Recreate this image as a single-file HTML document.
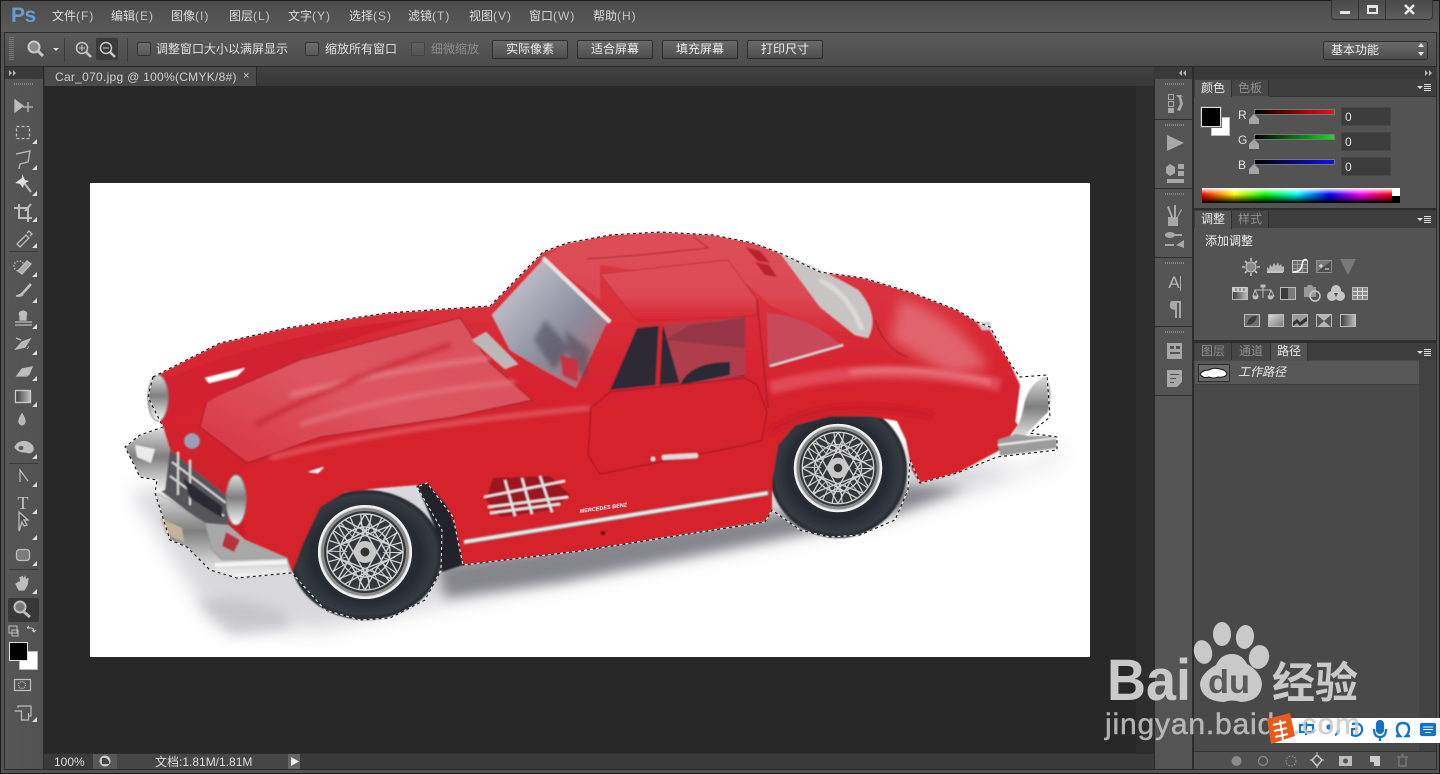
<!DOCTYPE html>
<html lang="zh"><head><meta charset="utf-8"><title>Photoshop</title>
<style>
html,body{margin:0;padding:0;background:#1c1c1c}
body{position:relative;width:1440px;height:774px;overflow:hidden;font-family:"Liberation Sans","WenQuanYi Zen Hei","Noto Sans CJK SC",sans-serif}
.b{position:absolute;box-sizing:border-box}
.t{position:absolute;white-space:nowrap;font-size:12px;line-height:14px;color:#e0e0e0}
.m{color:#dcdcdc;top:9px}
.m i{font-style:normal;color:#c0c6cc;letter-spacing:1px}
.btn{position:absolute;top:40px;width:76px;height:19px;box-sizing:border-box;border:1px solid #2e2e2e;border-radius:2px;background:linear-gradient(#6a6a6a,#4e4e4e);color:#ececec;font-size:12px;line-height:17px;text-align:center}
.chk{position:absolute;top:42px;width:14px;height:14px;box-sizing:border-box;border:1px solid #353535;border-radius:2px;background:linear-gradient(#6e6e6e,#595959)}
.tab{position:absolute;box-sizing:border-box;text-align:center;font-size:12px;line-height:16px;color:#8f8f8f;background:#464646;border-right:1px solid #303030}
.tab.on{background:#535353;color:#e6e6e6}
.inp{position:absolute;left:1341px;width:50px;height:19px;background:#3c3c3c;border:1px solid #474747;box-sizing:border-box;color:#e0e0e0;font-size:12px;line-height:18px;padding-left:3px}
</style></head><body>

<!-- chrome backgrounds -->
<div class="b" style="left:1px;top:1px;width:1438px;height:772px;background:#535353;border-radius:4px 4px 0 0"></div>
<div class="b" style="left:1px;top:1px;width:1438px;height:31px;background:linear-gradient(#4c4c4c,#5a5a5a)"></div>
<div class="b" style="left:4px;top:32px;width:1433px;height:1px;background:#2c2c2c"></div>
<div class="b" style="left:4px;top:33px;width:1433px;height:33px;background:linear-gradient(#5a5a5a,#4c4c4c)"></div>
<div class="b" style="left:4px;top:66px;width:1433px;height:1px;background:#2a2a2a"></div>
<div class="b" style="left:4px;top:32px;width:1px;height:738px;background:#2a2a2a"></div>
<div class="b" style="left:1436px;top:32px;width:1px;height:738px;background:#2a2a2a"></div>
<div class="b" style="left:4px;top:769px;width:1433px;height:1px;background:#2a2a2a"></div>

<!-- tools -->
<div class="b" style="left:5px;top:67px;width:38px;height:12px;background:#3a3a3a"></div>
<div class="b" style="left:5px;top:79px;width:38px;height:690px;background:linear-gradient(90deg,#565656,#525252)"></div>
<div class="b" style="left:43px;top:67px;width:1px;height:703px;background:#2a2a2a"></div>

<!-- tab row & document -->
<div class="b" style="left:44px;top:67px;width:1110px;height:19px;background:linear-gradient(#434343,#363636)"></div>
<div class="b" style="left:45px;top:67px;width:212px;height:19px;background:#4a4a4a;border-right:1px solid #2c2c2c"></div>
<div class="t" style="left:55px;top:70px;color:#cfcfcf;letter-spacing:.28px">Car_070.jpg @ 100%(CMYK/8#)</div>
<div class="t" style="left:243px;top:69px;color:#cfcfcf;font-size:11px">×</div>
<div class="b" style="left:44px;top:86px;width:1110px;height:667px;background:#282828"></div>
<div class="b" style="left:1136px;top:86px;width:18px;height:667px;background:#2d2d2d"></div>
<div class="b" style="left:44px;top:753px;width:1110px;height:16px;background:#3a3a3a;border-top:1px solid #2f2f2f"></div>
<div class="b" style="left:93px;top:754px;width:24px;height:15px;background:#585858"></div>
<div class="b" style="left:117px;top:754px;width:171px;height:15px;background:#464646"></div>
<div class="b" style="left:288px;top:754px;width:12px;height:15px;background:#666"></div>
<div class="b" style="left:90px;top:183px;width:1000px;height:474px;background:#fff"></div>
<div class="t" style="left:54px;top:755px;color:#dcdcdc">100%</div>
<div class="t" style="left:155px;top:755px;color:#dcdcdc">文档:1.81M/1.81M</div>

<!-- dock & panels -->
<div class="b" style="left:1154px;top:67px;width:283px;height:12px;background:#3a3a3a"></div>
<div class="b" style="left:1154px;top:79px;width:1px;height:691px;background:#2a2a2a"></div>
<div class="b" style="left:1155px;top:79px;width:37px;height:690px;background:#545454"></div>
<div class="b" style="left:1192px;top:67px;width:2px;height:703px;background:#2c2c2c"></div>
<div class="b" style="left:1155px;top:119px;width:37px;height:1px;background:#2e2e2e"></div>
<div class="b" style="left:1155px;top:188px;width:37px;height:1px;background:#2e2e2e"></div>
<div class="b" style="left:1155px;top:257px;width:37px;height:1px;background:#2e2e2e"></div>
<div class="b" style="left:1155px;top:326px;width:37px;height:1px;background:#2e2e2e"></div>
<div class="b" style="left:1155px;top:395px;width:37px;height:1px;background:#2e2e2e"></div>

<div class="b" style="left:1194px;top:79px;width:242px;height:17px;background:#3e3e3e"></div>
<div class="tab on" style="left:1195px;top:80px;width:37px;height:17px">颜色</div>
<div class="tab" style="left:1232px;top:80px;width:37px;height:16px">色板</div>
<div class="b" style="left:1194px;top:96px;width:1px;height:1px;background:#333"></div>
<div class="b" style="left:1269px;top:96px;width:167px;height:1px;background:#333"></div>
<div class="b" style="left:1194px;top:208px;width:242px;height:2px;background:#2e2e2e"></div>
<div class="b" style="left:1194px;top:210px;width:242px;height:18px;background:#3e3e3e"></div>
<div class="tab on" style="left:1195px;top:211px;width:37px;height:18px">调整</div>
<div class="tab" style="left:1232px;top:211px;width:37px;height:17px">样式</div>
<div class="b" style="left:1194px;top:340px;width:242px;height:3px;background:#2e2e2e"></div>
<div class="b" style="left:1194px;top:343px;width:242px;height:17px;background:#3e3e3e"></div>
<div class="tab" style="left:1195px;top:343px;width:37px;height:17px">图层</div>
<div class="tab" style="left:1232px;top:343px;width:39px;height:17px">通道</div>
<div class="b" style="left:1194px;top:360px;width:242px;height:391px;background:#494949"></div>
<div class="tab on" style="left:1271px;top:343px;width:37px;height:18px;background:#535353">路径</div>
<div class="b" style="left:1195px;top:361px;width:224px;height:24px;background:#575757;border-bottom:1px solid #3f3f3f"></div>
<div class="b" style="left:1419px;top:360px;width:17px;height:391px;background:#424242"></div>
<div class="b" style="left:1194px;top:751px;width:242px;height:18px;background:#505050;border-top:1px solid #333"></div>
<div class="t" style="left:1238px;top:365px;font-style:italic;color:#e8e8e8">工作路径</div>
<div class="b" style="left:1198px;top:364px;width:32px;height:18px;background:#6a6a6a;border:1px solid #2e2e2e"></div>

<!-- color panel -->
<div class="t" style="left:1238px;top:108px">R</div>
<div class="t" style="left:1238px;top:133px">G</div>
<div class="t" style="left:1238px;top:158px">B</div>
<div class="inp" style="top:107px">0</div>
<div class="inp" style="top:132px">0</div>
<div class="inp" style="top:157px">0</div>
<div class="b" style="left:1254px;top:109px;width:81px;height:6px;background:linear-gradient(90deg,#000,#f01010);border:1px solid #777"></div>
<div class="b" style="left:1254px;top:134px;width:81px;height:6px;background:linear-gradient(90deg,#000,#10e020);border:1px solid #777"></div>
<div class="b" style="left:1254px;top:159px;width:81px;height:6px;background:linear-gradient(90deg,#000,#1010f0);border:1px solid #777"></div>
<div class="b" style="left:1202px;top:188px;width:190px;height:15px;background:linear-gradient(#fff 0,rgba(255,255,255,0) 42%,rgba(0,0,0,0) 42%,#000 100%),linear-gradient(90deg,#f00,#ff0 17%,#0f0 33%,#0ff 50%,#00f 67%,#f0f 83%,#f00 100%)"></div>
<div class="b" style="left:1392px;top:188px;width:8px;height:8px;background:#fff"></div>
<div class="b" style="left:1392px;top:196px;width:8px;height:7px;background:#000"></div>
<div class="t" style="left:1205px;top:234px;color:#eee">添加调整</div>

<!-- menu -->
<div class="t" style="left:11px;top:4px;font-size:21px;line-height:24px;font-weight:bold;color:#6d9cca;letter-spacing:-.5px">Ps</div>
<div class="t m" style="left:52px">文件<i>(F)</i></div>
<div class="t m" style="left:111px">编辑<i>(E)</i></div>
<div class="t m" style="left:171px">图像<i>(I)</i></div>
<div class="t m" style="left:229px">图层<i>(L)</i></div>
<div class="t m" style="left:288px">文字<i>(Y)</i></div>
<div class="t m" style="left:349px">选择<i>(S)</i></div>
<div class="t m" style="left:408px">滤镜<i>(T)</i></div>
<div class="t m" style="left:469px">视图<i>(V)</i></div>
<div class="t m" style="left:529px">窗口<i>(W)</i></div>
<div class="t m" style="left:593px">帮助<i>(H)</i></div>

<!-- window controls -->
<div class="b" style="left:1331px;top:0;width:102px;height:20px;background:linear-gradient(#4a4a4a,#5c5c5c);border:1px solid #333;border-top:0;border-radius:0 0 4px 4px"></div>
<div class="b" style="left:1358px;top:0;width:1px;height:19px;background:#333"></div>
<div class="b" style="left:1385px;top:0;width:1px;height:19px;background:#333"></div>
<div class="b" style="left:1340px;top:11px;width:10px;height:3px;background:#e6e6e6"></div>
<div class="b" style="left:1367px;top:5px;width:11px;height:9px;border:2px solid #e6e6e6;border-top-width:3px"></div>

<!-- options bar -->
<div class="b" style="left:96px;top:38px;width:22px;height:22px;background:#3a3a3a;border-radius:2px"></div>
<div class="b" style="left:64px;top:38px;width:1px;height:23px;background:#3a3a3a"></div>
<div class="b" style="left:127px;top:38px;width:1px;height:23px;background:#3a3a3a"></div>
<div class="chk" style="left:137px"></div>
<div class="t" style="left:156px;top:42px">调整窗口大小以满屏显示</div>
<div class="chk" style="left:305px"></div>
<div class="t" style="left:325px;top:42px">缩放所有窗口</div>
<div class="chk" style="left:411px;opacity:.45"></div>
<div class="t" style="left:431px;top:42px;color:#8c8c8c">细微缩放</div>
<div class="btn" style="left:492px">实际像素</div>
<div class="btn" style="left:577px">适合屏幕</div>
<div class="btn" style="left:662px">填充屏幕</div>
<div class="btn" style="left:747px">打印尺寸</div>
<div class="b" style="left:1323px;top:41px;width:105px;height:19px;border:1px solid #2e2e2e;border-radius:3px;background:linear-gradient(#6a6a6a,#4e4e4e)"></div>
<div class="t" style="left:1331px;top:43px;color:#ececec">基本功能</div>

<!-- active zoom tool -->
<div class="b" style="left:8px;top:598px;width:31px;height:24px;background:#383838;border-radius:2px"></div>
<div class="b" style="left:19px;top:651px;width:19px;height:19px;background:#fff;border:1px solid #bbb"></div>
<div class="b" style="left:9px;top:642px;width:19px;height:19px;background:#000;border:1px solid #ddd"></div>
<div class="b" style="left:1211px;top:117px;width:19px;height:19px;background:#fff;border:1px solid #bbb"></div>
<div class="b" style="left:1201px;top:107px;width:20px;height:20px;background:#000;border:1px solid #ddd;outline:1px solid #666"></div>

<!-- everything drawn -->
<svg width="1440" height="774" viewBox="0 0 1440 774" style="position:absolute;left:0;top:0" xmlns="http://www.w3.org/2000/svg">
<defs>
<filter id="bl1" x="-10%" y="-10%" width="120%" height="120%"><feGaussianBlur stdDeviation=".7"/></filter>
<filter id="bl2" x="-30%" y="-30%" width="160%" height="160%"><feGaussianBlur stdDeviation="2.5"/></filter>
<filter id="bl4" x="-30%" y="-30%" width="160%" height="160%"><feGaussianBlur stdDeviation="6"/></filter>
<filter id="bl8" x="-30%" y="-30%" width="160%" height="160%"><feGaussianBlur stdDeviation="10"/></filter>
<linearGradient id="body" x1="0" y1="0" x2="0" y2="1"><stop offset="0" stop-color="#dc3a46"/><stop offset=".45" stop-color="#d6232f"/><stop offset="1" stop-color="#c81c28"/></linearGradient>
<linearGradient id="hood" x1="0" y1="1" x2="1" y2="0"><stop offset="0" stop-color="#d83340"/><stop offset=".45" stop-color="#dc5560"/><stop offset="1" stop-color="#d9505a"/></linearGradient>
<linearGradient id="roof" x1="0" y1="0" x2="0" y2="1"><stop offset="0" stop-color="#dd4e58"/><stop offset=".55" stop-color="#dc4a54"/><stop offset="1" stop-color="#d62430"/></linearGradient>
<linearGradient id="glass" x1="0" y1="0" x2="1" y2="1"><stop offset="0" stop-color="#d4d4da"/><stop offset=".6" stop-color="#8a8c9c"/><stop offset="1" stop-color="#c26069"/></linearGradient>
<linearGradient id="chrome" x1="0" y1="0" x2="0" y2="1"><stop offset="0" stop-color="#ddd"/><stop offset=".45" stop-color="#7e7e7e"/><stop offset=".75" stop-color="#c4c4c4"/><stop offset="1" stop-color="#f5f5f5"/></linearGradient>
<linearGradient id="g1" x1="0" y1="0" x2="1" y2="1"><stop offset="0" stop-color="#dcdcdc"/><stop offset="1" stop-color="#777"/></linearGradient>
<linearGradient id="g2" x1="0" y1="0" x2="1" y2="0"><stop offset="0" stop-color="#3c3c3c"/><stop offset="1" stop-color="#c0c0c0"/></linearGradient>
<radialGradient id="tire"><stop offset=".7" stop-color="#262a30"/><stop offset=".92" stop-color="#353b42"/><stop offset="1" stop-color="#22262a"/></radialGradient>
<g id="wheel">
 <circle r="47" fill="#d8d8d8"/><circle r="44" fill="#8a8a8a"/><circle r="41" fill="#34363a"/>
 <g stroke="#cfcfcf" stroke-width="1.4" fill="none">
  <circle r="38"/><circle r="25"/>
  <path d="M-38 0L20 32M-38 0L20 -32M38 0L-20 32M38 0L-20 -32M0 -38L32 20M0 -38L-32 20M0 38L32 -20M0 38L-32 -20M-27 -27L30 -5M27 -27L-30 -5M-27 27L30 5M27 27L-30 5M-27 -27L5 30M27 -27L-5 30M-27 27L5 -30M27 27L-5 -30"/>
  <circle r="28" stroke-width="20" stroke-dasharray="1 7" stroke="#d6d6d6"/>
 </g>
 <circle r="11" fill="#c8c8c8"/><circle r="4.500" fill="#333"/>
 <circle r="46" fill="none" stroke="#f2f2f2" stroke-width="2"/>
</g>
<g id="c"><path d="M0 0h5v-5z" fill="#ddd"/></g>
</defs>

<!-- ===== CAR ===== -->
<g>
 <path d="M130 490L215 625L320 630L440 605L780 540L900 515L1050 465L1070 445L1020 470L850 440L300 480Z" fill="#c4c4ca" filter="url(#bl8)" opacity=".65"/>
 <path d="M438 565L445 598L560 582L780 538L900 512L965 488L900 485L800 510Z" fill="#85858c" filter="url(#bl4)"/>
 <path d="M195 600L232 636L290 628L285 612L240 600Z" fill="#b4b4ba" filter="url(#bl4)" opacity=".55"/>
 <g filter="url(#bl1)">
 <!-- tires + wheel wells -->
 <path d="M417 485L427 483L447 505L455 525L463 565L442 572L436 530Z" fill="#20242a"/>
 <ellipse cx="366" cy="555" rx="76" ry="65" fill="url(#tire)"/>
 <ellipse cx="838" cy="470" rx="69" ry="68" fill="url(#tire)"/>
 <!-- body -->
 <path d="M153 377L220 343L287 328L387 313L490 306L543 252L567 243L610 235L660 232L713 235L753 243L780 253L820 272L863 278L913 293L957 310L977 322L990 330L1010 363L1020 385L1015 425L1000 450L957 473L920 483L912 470L906 440L897 421L870 416L830 416L795 425L778 445L772 480L772 510L765 521L580 551L463 565L455 525L447 505L427 483L417 485L380 488L345 492L320 507L303 543L292 572L287 558L245 540L228 525L170 450L160 420Z" fill="url(#body)"/>
 <!-- lower side -->
 <path d="M240 470Q360 412 590 408L770 402L905 385L1000 400L1018 425L1000 450L957 473L920 483L912 470L906 440L897 421L870 416L830 416L795 425L778 445L772 480L772 510L765 521L580 551L463 565L455 525L447 505L427 483L417 485L380 488L345 492L320 507L303 543L292 572L287 558L245 540Z" fill="#d6202c"/>
 <!-- hood -->
 <path d="M460 318L490 363L532 400L453 417L320 437L247 463L200 427L207 400L300 360Z" fill="url(#hood)"/>
 <path d="M460 318L490 363L532 400L453 417L320 437L247 463L200 427L207 400L300 360Z" fill="none" stroke="#8e1520" stroke-width=".8"/>
 <path d="M165 380Q280 330 430 318Q330 340 230 390Q190 412 170 420Z" fill="#d22230"/>
 <g filter="url(#bl2)" fill="none">
  <path d="M290 395Q380 372 490 358" stroke="#e67f85" stroke-width="4"/>
  <path d="M300 425Q400 392 515 382" stroke="#e5747b" stroke-width="4"/>
  <path d="M255 425Q330 385 450 345" stroke="#c92733" stroke-width="4"/>
  <path d="M270 458Q400 425 590 408" stroke="#e2636c" stroke-width="4"/>
  <path d="M770 388Q880 358 1000 385" stroke="#e24a56" stroke-width="13"/>
  <path d="M850 372Q920 365 990 382" stroke="#e77a80" stroke-width="4"/>
 </g>
 <path d="M900 298Q960 318 988 368L950 374L890 340Z" fill="#e1646c" filter="url(#bl4)"/>
 <path d="M770 432Q800 412 840 408Q890 406 930 415" stroke="#b81a26" stroke-width="2.500" fill="none" filter="url(#bl2)"/>
 <path d="M205 378l40-10-8 8-28 7zM308 472l16-5-6 6z" fill="#fff"/>
 <!-- roof / upper -->
 <path d="M543 258L567 243L660 232L713 236L753 245L780 253L820 307L865 342L845 340L770 305L748 285L600 265L600 300Z" fill="url(#roof)"/>
 <path d="M600 274L728 260L757 300V316L638 322Z" fill="url(#roof)" stroke="#b0202a" stroke-width=".6"/>
 <path d="M587 259L640 255L708 248L693 236" fill="none" stroke="#a8262e" stroke-width="1"/>
 <!-- windshield -->
 <path d="M492 315L543 260L607 322L576 388L540 368L510 350Z" fill="url(#glass)"/>
 <path d="M543 258L610 322" stroke="#e6e2e2" stroke-width="4" fill="none"/>
 <path d="M545 320l25 28-16 22-20-30zM565 330l25 20-5 30-15-20z" fill="#4a4654" opacity=".55" filter="url(#bl2)"/>
 <path d="M560 355l18 5 0 22-15-6z" fill="#c83040" filter="url(#bl1)"/>
 <path d="M472 340L486 332L518 364L505 369Z" fill="#bdb8b8"/>
 <!-- side windows -->
 <path d="M610 390L637 328L745 317V376Z" fill="#2f2c34"/>
 <path d="M663 325L745 317V375L680 385Z" fill="#b03c4c"/>
 <path d="M665 340L690 325L745 318V348Z" fill="#8a3042" opacity=".7"/>
 <path d="M680 385Q690 362 730 362V375Z" fill="#2a2c34"/>
 <rect x="657" y="325" width="4" height="64" fill="#d6252f" transform="rotate(3 659 357)"/>
 <path d="M767 313Q810 316 843 347L768 367Z" fill="#c84a5a"/>
 <path d="M770 366L843 345" stroke="#d8d8d8" stroke-width="2"/>
 <path d="M780 253Q820 268 858 290Q880 315 868 338L855 335L820 307Z" fill="#c9c4c4"/>
 <path d="M820 280Q850 295 862 330" stroke="#dcd9d9" stroke-width="5" fill="none" filter="url(#bl1)"/>
 <path d="M745 247l15 4 10 12-12-2zM755 262l14 3 8 12-12-2z" fill="#b8202c"/>
 <!-- door -->
 <path d="M591 408L610 392L745 378L757 385L767 412L762 440L745 445L600 474L588 455Z" fill="none" stroke="#9b1520" stroke-width="1"/>
 <path d="M757 300L768 408M875 320Q885 350 908 357" fill="none" stroke="#8e1a20" stroke-width="1"/>
 <rect x="662" y="454" width="36" height="5" rx="2" fill="#dcdcdc" transform="rotate(-3 680 457)"/>
 <circle cx="653" cy="459" r="2" fill="#fff"/>
 <!-- chrome side -->
 <path d="M464 540L768 491V495L464 544Z" fill="#e8e8e8" stroke="#7a7a7a" stroke-width=".8"/>
 <circle cx="603" cy="533" r="2" fill="#3a0a10"/>
 <!-- vent -->
 <path d="M486 500L493 478L550 476L570 495L552 510L500 517Z" fill="#9c1620"/>
 <path d="M484 497L565 481M488 507L568 497M490 513L560 504M505 480L515 516M522 478L532 514M540 476L552 512" stroke="#e6e6e6" stroke-width="2.400" fill="none"/>
 <!-- front grille -->
 <path d="M170 450L228 497V525L203 523L160 490Z" fill="#55555a"/>
 <path d="M172 462L226 503M170 476L224 516M178 452L178 495M190 460L190 505" stroke="#d8d8d8" stroke-width="2"/>
 <path d="M183 478L222 506L222 518L190 498Z" fill="#2c2c30"/>
 <path d="M228 525L245 540L287 558L222 560L212 550L205 523Z" fill="#a8a8a8"/>
 <path d="M226 532l14 8 -6 12-12-6z" fill="#b8323a"/>
 <ellipse cx="158" cy="398" rx="10" ry="23" fill="url(#chrome)" stroke="#777" stroke-width="1"/>
 <ellipse cx="236" cy="500" rx="10" ry="25" fill="url(#chrome)" stroke="#777" stroke-width="1"/>
 <circle cx="192" cy="441" r="8" fill="#9aa0b8" stroke="#b03a44" stroke-width="1"/>
 <path d="M125 447L140 435L163 427L170 450L165 490L155 493L157 480L140 477Z" fill="url(#chrome)"/>
 <path d="M135 445l20 4-4 14-14-6z" fill="#eaeaea"/>
 <path d="M155 493L170 500L205 523L212 550L222 560L287 558L290 573L237 578L210 570L187 547L170 540Z" fill="url(#chrome)" stroke="#888" stroke-width=".6"/>
 <path d="M160 518l22 10 2 14-18-8z" fill="#c2b49a"/>
 <path d="M215 565L287 562" stroke="#f4f4f4" stroke-width="4"/>
 <!-- rear bumper -->
 <path d="M1000 445Q1020 432 1024 405Q1028 385 1045 376Q1054 385 1048 412Q1040 420 1030 430L1015 445Z" fill="url(#chrome)"/>
 <path d="M998 440L1016 434L1030 436L1056 436L1057 448L1000 456Z" fill="#9c9c9c"/>
 <path d="M998 445L1056 438" stroke="#eee" stroke-width="2"/>
 <path d="M977 322L990 322L992 330L982 330Z" fill="#ccc"/>
 </g>
 <text x="580" y="513" font-size="5.500" font-weight="bold" font-style="italic" fill="#fff" transform="rotate(-8 580 513)" font-family="Liberation Sans">MERCEDES BENZ</text>
 <!-- wheels -->
 <use href="#wheel" x="365" y="552"/>
 <use href="#wheel" x="838" y="468" transform="translate(838 468) scale(.94) translate(-838 -468)"/>
 <!-- marching ants -->
 <g fill="none" stroke-width="1">
 <path d="M153 377L220 343L287 328L387 313L490 306L543 252L567 243L610 235L660 232L713 235L753 243L780 253L820 272L863 278L913 293L957 310L977 322L990 327L1010 363L1020 377L1047 375L1050 417L1030 433L1057 437L1057 450L997 457L957 473L920 483L910 460L908 490L895 520L860 535L830 537L800 530L772 510L765 522L580 551L463 565L453 517L427 483L417 487L442 530L441 570L425 600L390 618L360 620L325 610L292 573L290 573L237 578L210 570L187 547L170 540L155 493L157 480L140 477L125 447L140 435L163 427L148 397Z" stroke="#fff"/>
 <path d="M153 377L220 343L287 328L387 313L490 306L543 252L567 243L610 235L660 232L713 235L753 243L780 253L820 272L863 278L913 293L957 310L977 322L990 327L1010 363L1020 377L1047 375L1050 417L1030 433L1057 437L1057 450L997 457L957 473L920 483L910 460L908 490L895 520L860 535L830 537L800 530L772 510L765 522L580 551L463 565L453 517L427 483L417 487L442 530L441 570L425 600L390 618L360 620L325 610L292 573L290 573L237 578L210 570L187 547L170 540L155 493L157 480L140 477L125 447L140 435L163 427L148 397Z" stroke="#000" stroke-dasharray="3 3"/>
 </g>
</g>

<!-- ===== Window X & dropdown ===== -->
<path d="M1405 5l9 9M1414 5l-9 9" stroke="#e6e6e6" stroke-width="2.600"/>
<path d="M1418 47l3-4 3 4zM1418 52l3 4 3-4z" fill="#e6e6e6"/>

<!-- grips & collapse arrows -->
<path d="M9 37.500h5M9 39.500h5M9 41.500h5M9 43.500h5M9 45.500h5M9 47.500h5M9 49.500h5M9 51.500h5M9 53.500h5M9 55.500h5M9 57.500h5M9 59.500h5" stroke="#777" stroke-width="1"/>
<path d="M9 70l3 3-3 3zM13 70l3 3-3 3zM1186 70l-3 3 3 3zM1182 70l-3 3 3 3zM1425 70l3 3-3 3zM1429 70l3 3-3 3z" fill="#b5b5b5"/>
<g stroke="#888" stroke-dasharray="1 1" stroke-width="2">
<path d="M14 84h20M1165 84h20M1165 125h20M1165 194h20M1165 263h20M1165 332h20"/>
</g>
<!-- options bar icons -->
<g fill="none" stroke="#c8c8c8">
 <circle cx="34" cy="47" r="5.500" stroke-width="2" fill="#8a8a8a"/><path d="M38 51l5 5" stroke-width="3"/>
 <circle cx="82" cy="48" r="5.500" stroke-width="1.500"/><path d="M86 52l5 5" stroke-width="2.500"/><path d="M79 48h6M82 45v6" stroke-width="1"/>
 <circle cx="106" cy="48" r="5.500" stroke-width="1.500"/><path d="M110 52l5 5" stroke-width="2.500"/><path d="M103 48h6" stroke-width="1"/>
</g>
<path d="M53 48h6l-3 3z" fill="#ddd"/>
<!-- panel menu icons -->
<g id="pm"><path d="M1417 86h6l-3 3z" fill="#ddd"/><path d="M1424 84.500h7M1424 86.500h7M1424 88.500h7M1424 90.500h7" stroke="#ddd"/></g>
<use href="#pm" y="132"/><use href="#pm" y="265"/>
<path d="M1255 114l5 5v5h-10v-5zM1255 139l5 5v5h-10v-5zM1255 164l5 5v5h-10v-5z" fill="#a5a5a5" transform="translate(-1 0)"/>

<!-- tool icons -->
<g fill="none" stroke="#bdbdbd" stroke-width="1.300">
 <path d="M15 100l8 6-8 6z" fill="#bdbdbd"/><path d="M28 102v10M23 107h10"/>
 <rect x="16.500" y="126.500" width="13" height="12" stroke-dasharray="3 2"/>
 <path d="M16 154l14-3-2 11-8 2-1 5"/>
 <path d="M22 180l9 12" stroke-width="2"/><path d="M15 183l7-5 0-4 3 6 4 1-5 3-1 4-3-4z" fill="#ddd" stroke="none"/>
 <path d="M19 204v14h13M14 208h14v14M31 204l-6 7" stroke-width="2"/>
 <path d="M17 244l9-9 3 3-9 9zM27 233l2-2 3 3-2 2" fill="none"/>
 <circle cx="19" cy="266" r="5" stroke-dasharray="1.500 1.500"/><path d="M18 271l9-10 4 3-9 10z" fill="#aaa"/>
 <path d="M16 296q4-1 6-3l8-9 1 1-8 9q-1 3-7 2z" fill="#bdbdbd"/>
 <path d="M15 322h17M15 325h17"/><path d="M20 320v-4q-2-4 3-5 5 1 3 5v4z" fill="#bdbdbd"/>
 <path d="M16 349l6-7 8-3-5 8zM16 338l5 2" fill="#b5b5b5"/><path d="M27 349l2-3" stroke-dasharray="1 1"/>
 <path d="M17 376l5-7 10-2-3 7z" fill="#bdbdbd"/><path d="M17 376h10l2-2"/>
 <rect x="15.500" y="390.500" width="15" height="12" fill="url(#g2)" stroke="#ccc"/>
 <path d="M22 414q-6 9 0 11 6-2 0-11z" fill="#b5b5b5"/>
 <path d="M15 447q4-7 12-5 7 3 6 8-2 4-7 2-8 0-11-5z" fill="#bdbdbd"/><ellipse cx="21" cy="448" rx="2.500" ry="2" fill="#555" stroke="none"/>
 <path d="M20 482v-12l8 11" stroke-width="1.200"/>
 <path d="M19 531l0-19 9 8h-4l3 5-3 1-2-4z" fill="#4a4a4a"/>
 <rect x="16.500" y="549.500" width="13" height="11" rx="3" fill="#7c7c7c"/>
 <path d="M16 584l3-2 2 1-1-6 2 3 0-4 2 4 1-3 1 4 2-3-1 7-3 5h-5z" fill="#bdbdbd"/>
 <circle cx="20" cy="607" r="5.500" stroke-width="2" fill="#777"/><path d="M24 612l6 5" stroke-width="3"/>
 <rect x="14.500" y="679.500" width="16" height="11" stroke-width="1.200"/><circle cx="22" cy="685" r="3.500" stroke-dasharray="1 1"/>
 <path d="M14.500 711h7v9h7v-7M18 708v-2h13v10h-3" stroke-width="1.200" fill="none"/>
</g>
<text x="23" y="509" text-anchor="middle" font-family="Liberation Serif" font-size="18" fill="#c4c4c4">T</text>
<path d="M9 251.500h29M9 463.500h29M9 569.500h29" stroke="#3a3a3a"/>
<path d="M9 626h8v7h-8zM12 630h6v6h-6z" fill="#555" stroke="#bbb"/>
<path d="M27 628h4M27 628l2-2M31 628q3 0 3 4M34 632l-2-2M34 632l2-2" stroke="#ccc" fill="none"/>
<!-- small corner triangles -->
<g><use href="#c" x="32" y="144"/><use href="#c" x="32" y="170"/><use href="#c" x="32" y="196"/><use href="#c" x="32" y="222"/><use href="#c" x="32" y="248"/><use href="#c" x="32" y="277"/><use href="#c" x="32" y="303"/><use href="#c" x="32" y="329"/><use href="#c" x="32" y="355"/><use href="#c" x="32" y="381"/><use href="#c" x="32" y="407"/><use href="#c" x="32" y="459"/><use href="#c" x="32" y="487"/><use href="#c" x="32" y="514"/><use href="#c" x="32" y="540"/><use href="#c" x="32" y="566"/><use href="#c" x="32" y="594"/><use href="#c" x="32" y="722"/></g>

<!-- dock icons -->
<g fill="#a8a8a8" stroke="none">
 <path d="M1168.500 94.500h5v5h-5zM1168.500 101.500h5v5h-5z" stroke="#a8a8a8" fill="none"/><path d="M1168 108h6v5h-6z"/>
 <path d="M1176 95h5l3 2-3-1 2 8-3 7-3-1 3-6-1-6z"/>
 <path d="M1167 135l17 8-17 8z"/>
 <path d="M1170 164l-4 3v6l4 3 5-3v-6zM1178 164h6v5h-6zM1178 171h6v5h-6zM1167 179h17v4h-17z"/>
 <path d="M1168 217h10v9h-10zM1171 217l-4-10 2-1 4 11zM1174 217v-12h2v12zM1177 217l4-8 1 1-4 7z"/>
 <path d="M1165 234h17v2h-17zM1165 244h9v2h-9zM1176 245l8-5v8z"/><ellipse cx="1170" cy="235" rx="5" ry="3"/>
 <path d="M1180 276v15h1v-15z"/>
 <path d="M1172 301h9v17h-2v-15h-2v15h-2v-8q-6-1-5-5 0-4 2-4z"/>
 <path d="M1167 343h15v16h-15zM1170 346v3h4v-3zM1176 346v3h4v-3zM1170 352v2h10v-2z" fill-rule="evenodd"/>
 <path d="M1167 370h15v12l-5 5h-10zM1170 374v1h9v-1zM1170 378v1h6v-1zM1170 382v1h4v-1z" fill-rule="evenodd"/>
</g>
<text x="1174" y="288" text-anchor="middle" font-family="Liberation Sans" font-size="17" fill="#b8b8b8">A</text>

<!-- path thumb -->
<path d="M1200 374q3-4 9-4 5-3 11-1 6 1 7 5-2 4-9 3-4 2-9 0-6 2-9-3z" fill="#fff" stroke="#111"/>

<!-- adjustment icons -->
<g fill="none" stroke="#c4c4c4" stroke-width="1">
 <circle cx="1251" cy="267" r="5" fill="#888"/><path d="M1251 258v3M1251 273v3M1242 267h3M1257 267h3M1245 261l2 2M1255 271l2 2M1257 261l-2 2M1245 273l2-2" stroke-width="1.600"/>
 <path d="M1267 272v-5l2 2 1-5 2 3 2-4 2 3 2-4 1 4 2-2 1 3 2-1v6z" fill="#b5b5b5" stroke="none"/>
 <path d="M1267 272h16" stroke-width="2"/>
 <rect x="1292.500" y="260.500" width="15" height="12" fill="#6a6a6a"/><path d="M1293 264.500h14M1293 268.500h14M1297.500 261v11M1302.500 261v11" stroke="#999"/><path d="M1293 272q8 0 9-7t5-5" stroke="#fff" stroke-width="1.500"/>
 <path d="M1316.500 260.500h15v12h-15z" fill="#777" stroke="#8e8e8e"/><path d="M1317 272l14-11v11z" fill="#4e4e4e" stroke="none"/><path d="M1319 266h4M1321 264v4M1325 269h4" stroke="#eee"/>
</g>
<path d="M1340 259h16l-8 16z" fill="#7a7a7a"/>
<g fill="none" stroke="#bbb">
 <rect x="1232.500" y="287.500" width="15" height="12" fill="url(#g2)"/><path d="M1232 292v-5h15v5z" fill="#ccc" stroke-width="0"/><path d="M1236 288v3M1240 288v3M1244 288v3" stroke="#555"/>
 <path d="M1263 287v11M1255 290h16M1255 290l-2 6h5zM1271 290l-2 6h5z"/><path d="M1253 296h5q0 3-2.500 3t-2.500-3zM1268 296h5q0 3-2.500 3t-2.500-3z" fill="#bbb"/><path d="M1261 287h4v-2h-4z" fill="#bbb"/>
 <rect x="1280.500" y="287.500" width="15" height="12" fill="#7a7a7a"/><rect x="1281" y="288" width="7" height="11" fill="#3c3c3c" stroke="none"/>
 <path d="M1304 287h3l1-2h4l1 2h3v10h-12z" fill="#9a9a9a" stroke="none"/><circle cx="1315" cy="296" r="5" stroke="#c8c8c8" stroke-width="1.500"/>
 <g stroke="none" fill="#c4c4c4"><circle cx="1336" cy="290" r="5"/><circle cx="1332" cy="296" r="5"/><circle cx="1340" cy="296" r="5"/></g>
 <path d="M1334 293l2 4 2-4z" fill="#555" stroke="none"/>
 <rect x="1352.500" y="287.500" width="15" height="12" fill="#8a8a8a"/><path d="M1353 291.500h15M1353 295.500h15M1357.500 288v11M1362.500 288v11" stroke="#ddd"/>
 <rect x="1244.500" y="314.500" width="15" height="12" fill="#6e6e6e"/><path d="M1247 325q1-9 10-9-1 8-10 9z" fill="#3c3c3c" stroke="none"/>
 <rect x="1268.500" y="314.500" width="15" height="12" fill="url(#g1)"/>
 <rect x="1292.500" y="314.500" width="15" height="12" fill="#9b9b9b"/><path d="M1293 322l4-3 3 3 4-3 3-2v4l-3 2-4 3-3-3-4 3z" fill="#333" stroke="none"/>
 <rect x="1316.500" y="314.500" width="15" height="12" fill="#b5b5b5"/><path d="M1317 315l7 6-7 6zM1331 315l-7 6 7 6z" fill="#555" stroke="none"/>
 <rect x="1340.500" y="314.500" width="15" height="12" fill="url(#g2)"/>
</g>

<!-- status bar icon -->
<circle cx="105" cy="761" r="5.500" fill="#c8c8c8"/><path d="M102 758h4l3 3v3h-7z" fill="#444"/>
<path d="M291 757l8 4.500-8 4.500z" fill="#eee"/>

<!-- panel footer icons -->
<circle cx="1236.500" cy="761" r="5" fill="#8b8b8b"/>
<circle cx="1263" cy="761" r="4.500" fill="none" stroke="#8b8b8b" stroke-width="1.200"/>
<circle cx="1291" cy="761" r="5" fill="none" stroke="#999" stroke-dasharray="1.500 1.500"/>
<path d="M1317 755l5 5-5 6-5-6z" fill="none" stroke="#ccc" stroke-width="1.500"/><path d="M1312 760h-2M1324 760h-2M1317 754v-2M1317 768v-2" stroke="#ccc"/>
<rect x="1339" y="756" width="13" height="10" fill="#bcbcbc"/><circle cx="1345.500" cy="761" r="2.500" fill="#555"/>
<path d="M1370 756h10v10h-8v-4h-2z" fill="#ccc"/><path d="M1370 762h4v4h-2z" fill="#555"/>
<path d="M1397 757h11M1399 757v9h7v-9M1401 755h3" fill="none" stroke="#777" stroke-width="1.400"/>

<!-- IME -->
<rect x="1275" y="718" width="165" height="25" fill="#fff"/>
<g fill="none" stroke="#1473c8" stroke-width="2.200">
 <path d="M1300 725h13v7h-13zM1306 722v13"/>
 <circle cx="1329" cy="727" r="1.500"/><path d="M1338 730q0 4-3 5"/>
 <path d="M1352 724q11-2 10 7-3 7-10 4v-6h5"/>
 <rect x="1377" y="721" width="6" height="12" rx="3" fill="#1473c8"/><path d="M1374 729q0 8 6 8t6-8M1380 737v4"/>
 <path d="M1396 736h4q-3-3-3-7 0-6 6-6t6 6q0 4-3 7h4" stroke-width="2.400"/>
 <rect x="1421" y="724" width="14" height="11" rx="1" fill="#1473c8"/><path d="M1423 727h10M1423 729.500h10M1425 732.500h6" stroke="#fff" stroke-width="1"/>
</g>

<!-- Baidu watermark -->
<g fill="#c9c9c9">
 <ellipse cx="1222" cy="634" rx="9" ry="12"/><ellipse cx="1245" cy="637" rx="9" ry="12" transform="rotate(8 1245 637)"/>
 <ellipse cx="1203" cy="652" rx="9" ry="12" transform="rotate(-15 1203 652)"/><ellipse cx="1259" cy="657" rx="10" ry="12" transform="rotate(15 1259 657)"/>
 <path d="M1232 654q10 0 15 10 14 8 15 20-1 17-21 18-9-3-17 0-22-1-24-17 0-11 16-20 5-11 16-11z"/>
 <text x="1107" y="700" font-family="Liberation Sans" font-weight="bold" font-size="58" textLength="84" lengthAdjust="spacingAndGlyphs">Bai</text>
 <text x="1272" y="698" font-family="Liberation Sans,Noto Sans CJK SC,sans-serif" font-weight="bold" font-size="43">经验</text>
 <text x="1105" y="734" font-family="Liberation Sans" font-size="30" textLength="255" lengthAdjust="spacing" stroke="#c9c9c9" stroke-width=".5" opacity=".85">jingyan.baidu.com</text>
</g>
<text x="1208" y="693" font-family="Liberation Sans" font-weight="bold" font-size="33" fill="#5a5a5a" textLength="42" lengthAdjust="spacingAndGlyphs">du</text>
<path d="M1267 719l23-6 5 23-24 8z" fill="#ea5a1c"/>
<path d="M1273 725l13-3M1274 731l13-3M1275 737l13-3M1280 720l3 20" stroke="#fff" stroke-width="2"/>
</svg>
</body></html>
